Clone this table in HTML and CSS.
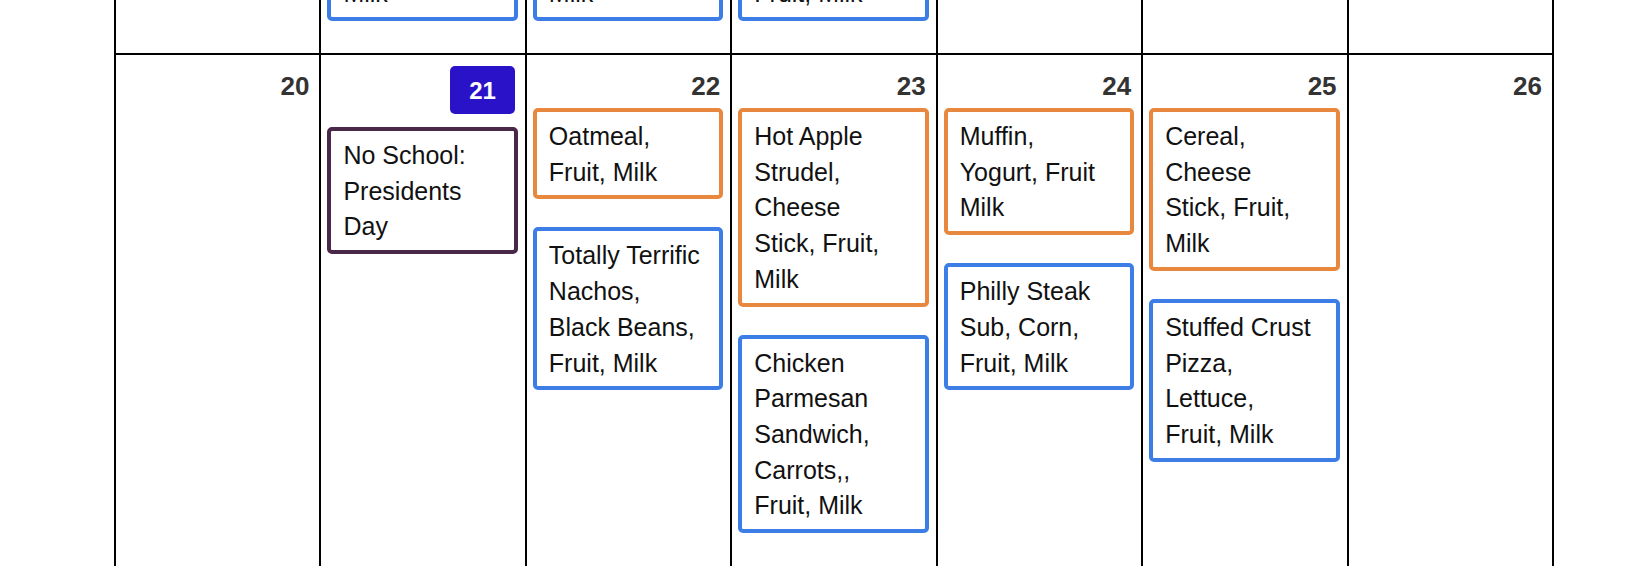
FILE: index.html
```html
<!DOCTYPE html>
<html lang="en">
<head>
    <meta charset="UTF-8">
    <meta name="viewport" content="width=device-width, initial-scale=1.0">
    <title>School Menu Calendar</title>
    <link rel="stylesheet" href="styles.css">
</head>
<body>
    <div class="calendar">
        <!-- previous week, scrolled mostly out of view -->
        <div class="week week-prev">
            <div class="day"></div>
            <div class="day">
                <div class="event lunch">Pasta Marinara, Cheese Stick, Fruit, Milk</div>
            </div>
            <div class="day">
                <div class="event lunch">Oven Baked Chicken, Rice, Fruit, Milk</div>
            </div>
            <div class="day">
                <div class="event lunch">Spaghetti, Garlic Bread, Fruit, Milk</div>
            </div>
            <div class="day"></div>
            <div class="day"></div>
            <div class="day"></div>
        </div>

        <div class="week">
            <div class="day">
                <div class="day-head"><span class="num">20</span></div>
            </div>
            <div class="day today">
                <div class="day-head"><span class="num">21</span></div>
                <div class="event no-school">No School: Presidents Day</div>
            </div>
            <div class="day">
                <div class="day-head"><span class="num">22</span></div>
                <div class="event breakfast">Oatmeal, Fruit, Milk</div>
                <div class="event lunch"><span class="nw">Totally Terrific</span> Nachos, Black Beans, Fruit, Milk</div>
            </div>
            <div class="day">
                <div class="day-head"><span class="num">23</span></div>
                <div class="event breakfast">Hot Apple Strudel, Cheese Stick, Fruit, Milk</div>
                <div class="event lunch">Chicken Parmesan Sandwich, Carrots,, Fruit, Milk</div>
            </div>
            <div class="day">
                <div class="day-head"><span class="num">24</span></div>
                <div class="event breakfast">Muffin, Yogurt, Fruit Milk</div>
                <div class="event lunch">Philly Steak Sub, Corn, Fruit, Milk</div>
            </div>
            <div class="day">
                <div class="day-head"><span class="num">25</span></div>
                <div class="event breakfast">Cereal, Cheese Stick, Fruit, Milk</div>
                <div class="event lunch">Stuffed Crust Pizza, Lettuce, Fruit, Milk</div>
            </div>
            <div class="day">
                <div class="day-head"><span class="num">26</span></div>
            </div>
        </div>
    </div>
</body>
</html>
```

FILE: styles.css
```css
html, body {
    margin: 0;
    padding: 0;
    overflow: hidden;
    background: #fff;
}
body {
    font-family: "Liberation Sans", Arial, sans-serif;
    font-size: 25px;
    line-height: 35.7px;
    color: #111;
}
.calendar {
    width: 1440px;
    margin-left: 114px;
    border-left: 2px solid #000;
    box-sizing: border-box;
}
.week {
    display: grid;
    grid-template-columns: repeat(7, 1fr);
    min-height: 620px;
    border-top: 2px solid #000;
}
.week-prev {
    grid-template-rows: 53px;
    min-height: 0;
    height: 53px;
    border-top: none;
    overflow: hidden;
}
.day {
    display: flex;
    flex-direction: column;
    padding: 11px 7px 4px 6px;
    border-right: 2px solid #000;
    min-width: 0;
}
.week-prev .day {
    justify-content: flex-end;
}
.day-head {
    display: flex;
    justify-content: flex-end;
    margin: 0 3px 2px 0;
}
.num {
    display: block;
    padding: 5px 0;
    font-size: 26px;
    line-height: 30px;
    font-weight: bold;
    color: #333;
}
.today .day-head {
    margin-bottom: 13px;
}
.today .num {
    padding: 10px 19px 8px;
    font-size: 24px;
    background: #2a12c9;
    color: #fff;
    border-radius: 5px;
}
.event {
    flex-shrink: 0;
    margin-bottom: 28px;
    padding: 7px 21px 5px 12px;
    border: 4px solid #3d7ee6;
    border-radius: 5px;
}
.event.breakfast {
    border-color: #e8883f;
}
.event.lunch {
    border-color: #3d7ee6;
}
.event.no-school {
    border-color: #4a2849;
}
.nw {
    white-space: nowrap;
}
```
